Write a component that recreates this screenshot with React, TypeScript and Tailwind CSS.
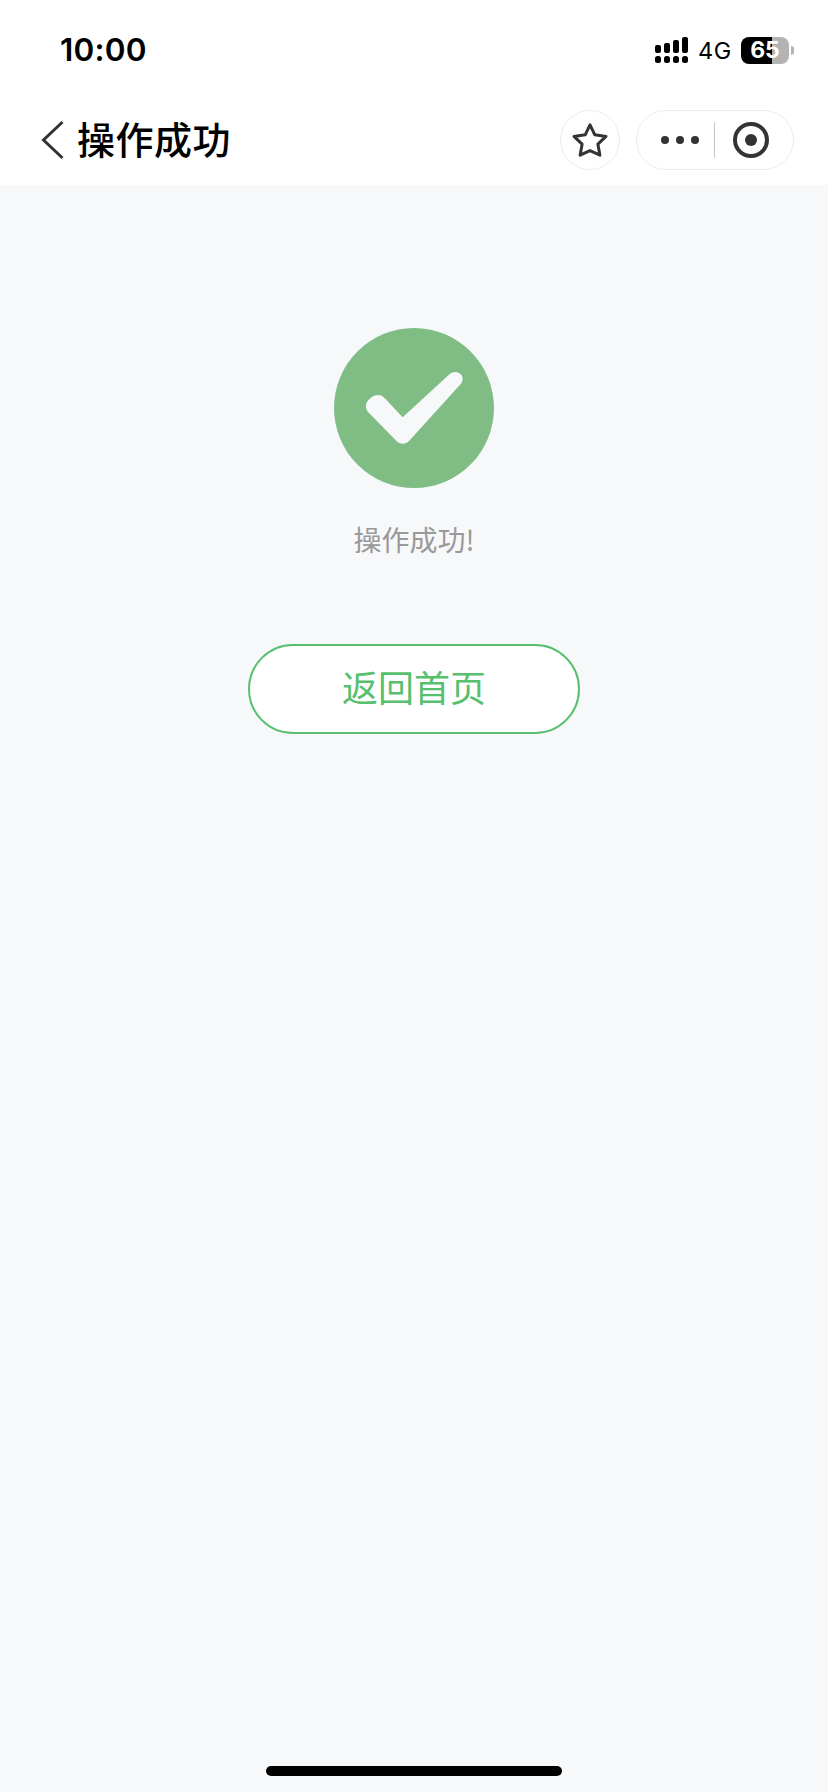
function StatusBar() {
  return (
    <div className="flex h-[100px] items-center justify-between pl-[60px] pr-[34px] text-black">
      <span className="font-['Inter',sans-serif] text-[31.5px] font-semibold leading-none tracking-[0.2px]">
        10:00
      </span>

      <div className="flex items-center">
        <svg className="h-[26px] w-[33px]" viewBox="0 0 33 26" fill="currentColor">
          <rect x="0" y="8" width="6" height="8" rx="2" />
          <rect x="9" y="6" width="6" height="10" rx="2" />
          <rect x="18" y="3" width="6" height="13" rx="2" />
          <rect x="27" y="0" width="6" height="16" rx="2" />
          <rect x="0" y="19" width="6" height="7" rx="2.5" />
          <rect x="9" y="19" width="6" height="7" rx="2.5" />
          <rect x="18" y="19" width="6" height="7" rx="2.5" />
          <rect x="27" y="19" width="6" height="7" rx="2.5" />
        </svg>

        <span className="ml-[10px] w-[43px] pt-[2px] font-['Inter',sans-serif] text-[23.5px] leading-none tracking-[0.5px]">
          4G
        </span>

        <div className="flex h-[27px] w-12 items-center justify-center rounded-[8px] bg-linear-to-r from-black from-[31px] to-[#b3b3b3] to-[31px] font-['Inter',sans-serif] text-[23px] font-bold leading-none text-white">
          65
        </div>
        <div className="ml-[2px] h-[9px] w-[3px] rounded-r-full bg-[#b3b3b3]" />
      </div>
    </div>
  );
}

function NavBar() {
  return (
    <div className="flex h-[85px] items-center pb-[5px] pl-[39px] pr-[34px]">
      <svg className="h-[40px] w-[26px]" viewBox="0 0 26 40" fill="none">
        <path d="M23.5 2 4.5 20l19 18" stroke="#333" strokeWidth="3" />
      </svg>
      <h1 className="ml-3 pb-[5px] text-[38px] font-medium leading-none tracking-[0.5px] text-black">
        操作成功
      </h1>

      <button className="ml-auto flex size-[60px] items-center justify-center rounded-full border border-[#ececec]">
        <svg className="size-[40px]" viewBox="0 0 40 40" fill="none">
          <path
            d="M20 4.8 24.8 14.8 36 16.4 27.9 24.2 29.9 35.2 20 30.6 10.1 35.2 12.1 24.2 4 16.4 15.2 14.8Z"
            stroke="#333"
            strokeWidth="3"
            strokeLinejoin="round"
          />
        </svg>
      </button>

      <div className="ml-4 flex h-[60px] w-[158px] items-center rounded-full border border-[#ececec]">
        <button className="flex w-[77px] justify-end gap-[7px] pr-[15px]">
          <span className="size-2 rounded-full bg-[#333]" />
          <span className="size-2 rounded-full bg-[#333]" />
          <span className="size-2 rounded-full bg-[#333]" />
        </button>
        <span className="h-9 w-px bg-[#c4c4c4]" />
        <button className="ml-[18px] flex size-9 items-center justify-center rounded-full border-4 border-[#333]">
          <span className="size-3 rounded-full bg-[#333]" />
        </button>
      </div>
    </div>
  );
}

export default function App() {
  return (
    <div className="flex h-[1792px] w-[828px] flex-col bg-[#f6f8fa] font-['Noto_Sans_CJK_SC',sans-serif]">
      <header className="bg-white">
        <StatusBar />
        <NavBar />
      </header>

      <main className="flex flex-1 flex-col items-center pt-[143px]">
        <svg className="size-[160px]" viewBox="0 0 160 160">
          <circle cx="80" cy="80" r="80" fill="#7fbd84" />
          <path
            d="M68.7 89.3 115.5 46.3C119 43 124 43.2 127 46.5C129.3 49.3 129.2 53.5 126.5 56.3L75.5 112.5C71.5 116.7 66 116.7 62.5 113L34.5 84.5C31 80.5 31 75.5 34.5 72C40 66 46.5 65.5 51 70.5Z"
            fill="#f6f8fa"
          />
        </svg>
        <p className="mt-[31px] text-[28px] leading-10 text-[#999]">操作成功!</p>
        <button className="mt-[85px] h-[90px] w-[332px] rounded-full border-2 border-[#56c06e] bg-white pb-[7px] text-[36px] leading-none text-[#56c06e]">
          返回首页
        </button>
      </main>

      <div className="mx-auto mb-4 h-[10px] w-[296px] rounded-full bg-black" />
    </div>
  );
}
